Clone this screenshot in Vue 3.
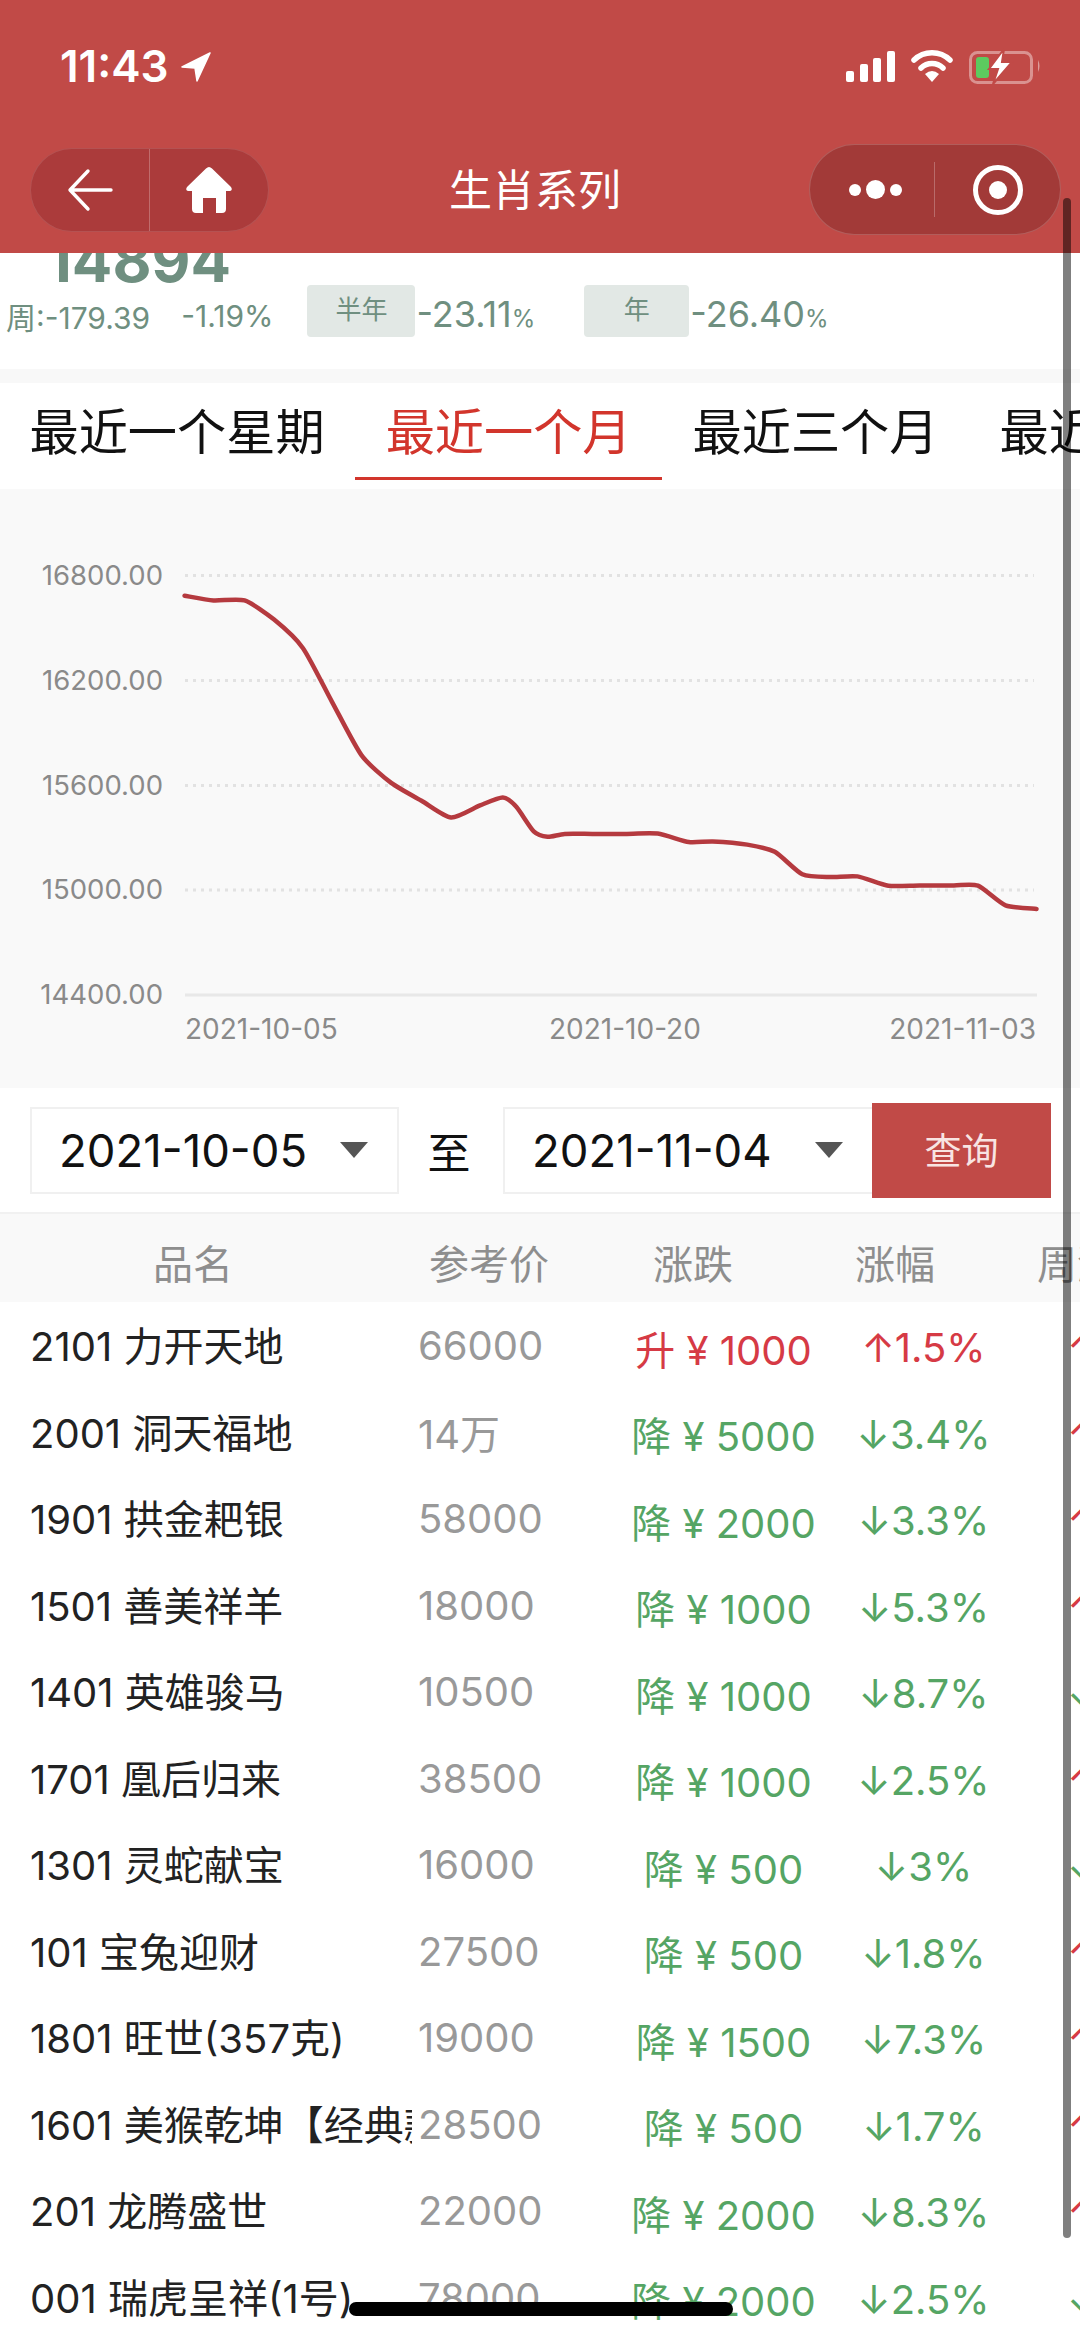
<script setup>
import { computed } from "vue";

const tabs = ["最近一个星期", "最近一个月", "最近三个月", "最近半年"];

const products = [
  { name: "2101 力开天地", price: "66000", change: "升 ¥ 1000", pct: "↑1.5%", week: "↑0.8%", up: true, weekUp: true },
  { name: "2001 洞天福地", price: "14万", change: "降 ¥ 5000", pct: "↓3.4%", week: "↑2.1%", up: false, weekUp: true },
  { name: "1901 拱金耙银", price: "58000", change: "降 ¥ 2000", pct: "↓3.3%", week: "↑1.7%", up: false, weekUp: true },
  { name: "1501 善美祥羊", price: "18000", change: "降 ¥ 1000", pct: "↓5.3%", week: "↑1.1%", up: false, weekUp: true },
  { name: "1401 英雄骏马", price: "10500", change: "降 ¥ 1000", pct: "↓8.7%", week: "↓0.9%", up: false, weekUp: false },
  { name: "1701 凰后归来", price: "38500", change: "降 ¥ 1000", pct: "↓2.5%", week: "↑1.3%", up: false, weekUp: true },
  { name: "1301 灵蛇献宝", price: "16000", change: "降 ¥ 500", pct: "↓3%", week: "↓1.2%", up: false, weekUp: false },
  { name: "101 宝兔迎财", price: "27500", change: "降 ¥ 500", pct: "↓1.8%", week: "↑1.8%", up: false, weekUp: true },
  { name: "1801 旺世(357克)", price: "19000", change: "降 ¥ 1500", pct: "↓7.3%", week: "↑1.5%", up: false, weekUp: true },
  { name: "1601 美猴乾坤【经典款】", price: "28500", change: "降 ¥ 500", pct: "↓1.7%", week: "↑1.7%", up: false, weekUp: true },
  { name: "201 龙腾盛世", price: "22000", change: "降 ¥ 2000", pct: "↓8.3%", week: "↑1.4%", up: false, weekUp: true },
  { name: "001 瑞虎呈祥(1号)", price: "78000", change: "降 ¥ 2000", pct: "↓2.5%", week: "↓1.2%", up: false, weekUp: false },
];

const gridLines = [
  { y: 86.5, label: "16800.00" },
  { y: 191.5, label: "16200.00" },
  { y: 296.5, label: "15600.00" },
  { y: 401, label: "15000.00" },
];

// chart points, already in svg pixels
const points = [
  [184.6, 106.7], [213.5, 111.4], [244.5, 111.4], [274.1, 130.6], [303, 159.2], [332, 212.8],
  [361.6, 266.4], [391.2, 293.9], [421.5, 311.7], [451.1, 328.5], [480, 316.4], [502.8, 308.5],
  [516.5, 318.1], [533.7, 342.4], [547.5, 347.8], [564.7, 344.9], [592.3, 344.9], [623.3, 344.9],
  [657.7, 344.6], [688.7, 353.1], [712.8, 352.4], [747.2, 355.6], [774.8, 362.8], [802.3, 385.3],
  [829.9, 388.1], [857.4, 387.4], [888.4, 396.7], [919.4, 396.4], [953.9, 396.4], [978, 396.7],
  [1005.5, 416.4], [1036.5, 419.9],
];

// smooth the line with catmull-rom segments, a bit tighter than the usual /6
const linePath = computed(() => {
  const k = 9;
  let d = `M${points[0][0]} ${points[0][1]}`;
  for (let i = 0; i < points.length - 1; i++) {
    const p0 = points[Math.max(i - 1, 0)];
    const p1 = points[i];
    const p2 = points[i + 1];
    const p3 = points[Math.min(i + 2, points.length - 1)];
    const c1x = (p1[0] + (p2[0] - p0[0]) / k).toFixed(1);
    const c1y = (p1[1] + (p2[1] - p0[1]) / k).toFixed(1);
    const c2x = (p2[0] - (p3[0] - p1[0]) / k).toFixed(1);
    const c2y = (p2[1] - (p3[1] - p1[1]) / k).toFixed(1);
    d += ` C${c1x} ${c1y} ${c2x} ${c2y} ${p2[0]} ${p2[1]}`;
  }
  return d;
});
</script>

<template>
  <div class="page">
    <header class="header">
      <div class="status">
        <div class="status-left">
          <span class="time">11:43</span>
          <svg class="loc" width="30" height="30" viewBox="0 0 30 30">
            <path d="M29 1 L1 15 L14 16 L16 29 Z" fill="#fff" stroke="#fff" stroke-width="1.5" stroke-linejoin="round" />
          </svg>
        </div>
        <svg class="status-right" width="194" height="36" viewBox="0 0 194 36">
          <rect x="-1" y="23" width="8" height="11" rx="2" fill="#fff" />
          <rect x="13" y="16" width="8" height="18" rx="2" fill="#fff" />
          <rect x="26" y="10" width="8" height="24" rx="2" fill="#fff" />
          <rect x="40" y="3" width="8" height="31" rx="2" fill="#fff" />
          <path d="M67 12 A26 26 0 0 1 103 12" fill="none" stroke="#fff" stroke-width="5.5" stroke-linecap="round" />
          <path d="M74 20 A16 16 0 0 1 96 20" fill="none" stroke="#fff" stroke-width="5.5" stroke-linecap="round" />
          <path d="M78 26 Q85 20 92 26 L85 34 Z" fill="#fff" />
          <rect x="123.5" y="4.500" width="61" height="30" rx="7" fill="none" stroke="#fff" stroke-opacity=".4" stroke-width="3" />
          <rect x="129" y="9" width="13" height="21" rx="3" fill="#5ccb5f" />
          <path d="M191 12 Q194 18 191 24 Z" fill="#fff" fill-opacity=".45" />
          <path d="M157 1 L142 21 L151 21 L146 36 L165 14 L155 14 Z" fill="#fff" stroke="#c14a47" stroke-width="2" />
        </svg>
      </div>
      <nav class="nav">
        <div class="pill-left">
          <button class="pill-btn">
            <svg width="46" height="44" viewBox="0 0 46 44">
              <path d="M44 22 H4 M21 3 L3 22 L21 41" fill="none" stroke="#fff" stroke-width="3.400" stroke-linecap="round" stroke-linejoin="round" />
            </svg>
          </button>
          <button class="pill-btn pill-home">
            <svg width="48" height="48" viewBox="0 0 48 48">
              <path d="M24 1 Q25.500 1 27 2.500 L46 21 Q48 24 45 25 L41 25 L41 43 Q41 47 37 47 L31 47 L31 32 L18 32 L18 47 L11 47 Q7 47 7 43 L7 25 L3 25 Q0 24 2 21 L21 2.500 Q22.500 1 24 1 Z" fill="#fff" />
            </svg>
          </button>
        </div>
        <h1 class="title">生肖系列</h1>
        <div class="pill-right">
          <div class="dots">
            <i class="dot"></i>
            <i class="dot dot-big"></i>
            <i class="dot"></i>
          </div>
          <div class="target"><i></i></div>
        </div>
      </nav>
    </header>

    <main class="content">
      <section class="stats">
        <div class="stats-num">14894</div>
        <div class="stats-row">
          <span class="week">周:-179.39</span>
          <span class="week week-pct">-1.19%</span>
          <span class="chip chip-half">半年</span>
          <span class="val">-23.11<small>%</small></span>
          <span class="chip chip-year">年</span>
          <span class="val">-26.40<small>%</small></span>
        </div>
      </section>

      <div class="tabs">
        <div v-for="(tab, i) in tabs" :key="tab" class="tab" :class="{ active: i === 1 }">{{ tab }}</div>
      </div>

      <section class="chart">
        <svg width="1080" height="599" viewBox="0 0 1080 599">
          <g v-for="line in gridLines" :key="line.y">
            <line x1="185" x2="1034" :y1="line.y" :y2="line.y" stroke="#e2e2e2" stroke-width="3" stroke-dasharray="3 5" />
            <text x="163" :y="line.y + 9" text-anchor="end" class="axis">{{ line.label }}</text>
          </g>
          <line x1="185" x2="1037" y1="506" y2="506" stroke="#e8e8e8" stroke-width="3" />
          <text x="163" y="515" text-anchor="end" class="axis">14400.00</text>
          <text x="185" y="550" class="axis axis-x">2021-10-05</text>
          <text x="549" y="550" class="axis axis-x">2021-10-20</text>
          <text x="1036" y="550" text-anchor="end" class="axis axis-x">2021-11-03</text>
          <path :d="linePath" fill="none" stroke="#b53a3f" stroke-width="4.500" stroke-linecap="round" stroke-linejoin="round" />
        </svg>
      </section>

      <section class="filter">
        <div class="select">
          <span>2021-10-05</span>
          <i class="caret"></i>
        </div>
        <span class="to">至</span>
        <div class="select select-end">
          <span>2021-11-04</span>
          <i class="caret"></i>
        </div>
        <button class="query">查询</button>
      </section>

      <div class="thead">
        <span>品名</span>
        <span>参考价</span>
        <span>涨跌</span>
        <span>涨幅</span>
        <span class="nowrap">周涨幅</span>
      </div>

      <div v-for="item in products" :key="item.name" class="row">
        <span class="name">{{ item.name }}</span>
        <span class="price">{{ item.price }}</span>
        <span class="num" :class="item.up ? 'up' : 'down'">{{ item.change }}</span>
        <span class="num" :class="item.up ? 'up' : 'down'">{{ item.pct }}</span>
        <span class="num week-col" :class="item.weekUp ? 'up' : 'down'">{{ item.week }}</span>
      </div>
    </main>

    <div class="scrollbar"></div>
    <div class="home-bar"></div>
  </div>
</template>

<style scoped>
.page {
  position: relative;
  width: 1080px;
  height: 2339px;
  display: flex;
  flex-direction: column;
  overflow: hidden;
  background: #fff;
  font-family: Inter, "Noto Sans CJK SC", sans-serif;
}

.header {
  position: relative;
  z-index: 2;
  flex: none;
  height: 253px;
  background: #c14a47;
  color: #fff;
}

.status {
  display: flex;
  justify-content: space-between;
  align-items: flex-start;
  height: 144px;
  padding: 48px 32px 0 60px;
  box-sizing: border-box;
}

.status-left {
  display: flex;
  align-items: center;
  gap: 12px;
}

.time {
  font-size: 44px;
  font-weight: 600;
  line-height: 36px;
}

.loc {
  margin-top: 2px;
}

.status-right {
  margin-right: 7px;
  overflow: visible;
}

.nav {
  display: flex;
  align-items: center;
  justify-content: space-between;
  height: 91px;
  padding: 0 19px 0 30px;
}

.pill-left {
  display: flex;
  width: 239px;
  height: 84px;
  box-sizing: border-box;
  background: #ab3b3b;
  border: 1px solid rgba(255, 255, 255, 0.12);
  border-radius: 42px;
}

.pill-btn {
  flex: 1;
  padding: 0;
  display: flex;
  align-items: center;
  justify-content: center;
  background: none;
  border: none;
}

.pill-home {
  border-left: 1px solid rgba(255, 255, 255, 0.25);
}

.title {
  position: absolute;
  left: 0;
  right: 0;
  top: 167px;
  margin: 0;
  padding-right: 10px;
  text-align: center;
  font-size: 43px;
  font-weight: 400;
  line-height: 46px;
}

.pill-right {
  display: flex;
  align-items: center;
  width: 252px;
  height: 91px;
  box-sizing: border-box;
  background: #a23a38;
  border: 1px solid rgba(255, 255, 255, 0.18);
  border-radius: 46px;
}

.dots {
  display: flex;
  align-items: center;
  justify-content: center;
  gap: 5px;
  width: 125px;
  height: 55px;
  padding-left: 7px;
  box-sizing: border-box;
  border-right: 1px solid rgba(255, 255, 255, 0.25);
}

.dot {
  width: 12px;
  height: 12px;
  border-radius: 50%;
  background: #fff;
}

.dot-big {
  width: 19px;
  height: 19px;
}

.target {
  display: flex;
  align-items: center;
  justify-content: center;
  width: 50px;
  height: 50px;
  margin-left: 38px;
  box-sizing: border-box;
  border: 5.5px solid #fff;
  border-radius: 50%;
}

.target i {
  width: 18px;
  height: 18px;
  border-radius: 50%;
  background: #fff;
}

.content {
  flex: 1;
  min-height: 0;
}

.stats {
  height: 116px;
  position: relative;
  color: #6f8f80;
}

.stats-num {
  position: absolute;
  left: 46px;
  top: -23px;
  font-size: 60px;
  font-weight: 700;
  line-height: 60px;
}

.stats-row {
  position: absolute;
  left: 6px;
  top: 32px;
  display: flex;
  align-items: center;
  height: 52px;
  white-space: nowrap;
}

.week {
  font-size: 30px;
  padding-top: 10px;
}

.week-pct {
  margin-left: 31px;
}

.chip {
  width: 108px;
  height: 52px;
  box-sizing: border-box;
  padding-top: 6px;
  text-align: center;
  font-size: 26px;
  line-height: 38px;
  background: #e2e8e5;
  border-radius: 4px;
}

.chip-half {
  margin-left: 34px;
}

.chip-year {
  width: 105px;
  margin-left: 49px;
}

.val {
  margin-left: 1px;
  padding-top: 6px;
  font-size: 36px;
}

.val small {
  font-size: 24px;
}

.tabs {
  display: flex;
  height: 106px;
  margin-left: -1px;
  white-space: nowrap;
  border-top: 14px solid #f8f8f8;
}

.tab {
  flex: none;
  height: 94px;
  padding: 0 30.5px;
  font-size: 49.200px;
  line-height: 98px;
  color: #111;
}

.tab.active {
  color: #d2352c;
  border-bottom: 3px solid #d2352c;
}

.chart {
  height: 599px;
  background: #f9f9f9;
}

.chart svg {
  display: block;
}

.axis {
  font-family: Inter, sans-serif;
  font-size: 27.500px;
  fill: #8a8a8a;
}

.axis-x {
  font-size: 28px;
}

.filter {
  display: flex;
  align-items: center;
  height: 124px;
  padding-left: 30px;
  border-bottom: 2px solid #f1f1f1;
}

.select {
  display: flex;
  align-items: center;
  justify-content: space-between;
  width: 369px;
  height: 87px;
  box-sizing: border-box;
  padding: 0 29px 0 27px;
  border: 2px solid #f0f0f0;
  font-size: 45.500px;
  color: #111;
}

.select-end {
  border-right: none;
}

.caret {
  width: 0;
  height: 0;
  border-left: 14px solid transparent;
  border-right: 14px solid transparent;
  border-top: 16px solid #555;
}

.to {
  width: 104px;
  padding-right: 4px;
  box-sizing: border-box;
  text-align: center;
  font-size: 43px;
  color: #111;
}

.query {
  width: 179px;
  height: 95px;
  padding: 0 0 2px;
  border: none;
  background: #c14a47;
  color: #f8e4e2;
  font-family: inherit;
  font-size: 37px;
}

.thead {
  display: grid;
  grid-template-columns: 386px 206px 202px 202px 202px;
  width: 1198px;
  height: 88px;
  padding-top: 8px;
  box-sizing: border-box;
  align-items: center;
  text-align: center;
  background: #f9f9f9;
  font-size: 40px;
  color: #8e8e8e;
}

.row {
  display: grid;
  grid-template-columns: 412px 208px 206px 194px 200px;
  width: 1220px;
  height: 86.5px;
  align-items: center;
  font-size: 40px;
  white-space: nowrap;
}

.name {
  padding: 0 0 2px 30px;
  overflow: hidden;
  color: #222;
}

.price {
  padding: 1px 0 0 6px;
  color: #999;
}

.num {
  padding-top: 5px;
  padding-left: 1px;
  text-align: center;
}

.week-col {
  padding-left: 47px;
  text-align: left;
}

.up {
  color: #d63a45;
}

.down {
  color: #55a564;
}

.scrollbar {
  position: absolute;
  z-index: 3;
  left: 1063px;
  top: 198px;
  width: 8px;
  height: 2040px;
  border-radius: 4px;
  background: rgba(0, 0, 0, 0.5);
}

.home-bar {
  position: absolute;
  z-index: 3;
  left: 349px;
  top: 2302px;
  width: 384px;
  height: 14px;
  border-radius: 7px;
  background: #000;
}
</style>

<style>
html,
body {
  margin: 0;
  overflow: hidden;
}
</style>
